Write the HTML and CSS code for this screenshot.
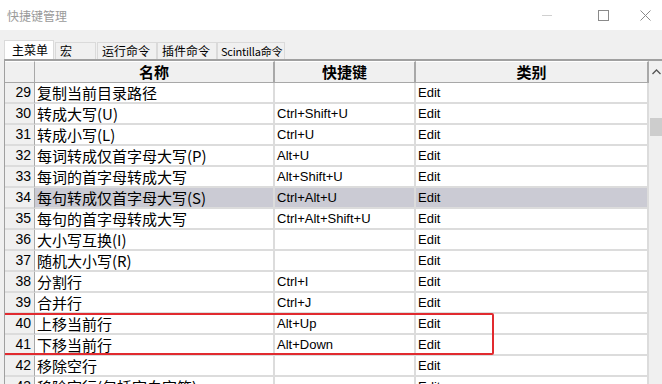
FILE: index.html
```html
<!DOCTYPE html>
<html lang="zh-CN">
<head>
  <meta charset="UTF-8" />
  <title>快捷键管理</title>
  <link rel="stylesheet" href="styles.css">
</head>
<body>
  <div class="window">
    <div class="titlebar">
      <span class="title">快捷键管理</span>
      <div class="controls">
        <span class="ctl min"></span>
        <span class="ctl max"></span>
        <svg class="ctl close" width="11" height="11" viewBox="0 0 11 11"><path d="M0.5 0.5 L10.5 10.5 M10.5 0.5 L0.5 10.5" stroke="#8a8a8a" stroke-width="1" fill="none"/></svg>
      </div>
    </div>

    <div class="tabs">
      <div class="tab active">主菜单</div>
      <div class="tab w40">宏</div>
      <div class="tab">运行命令</div>
      <div class="tab">插件命令</div>
      <div class="tab sci">Scintilla命令</div>
    </div>

    <div class="grid">
      <div class="table">
        <div class="row head">
          <div class="num"></div>
          <div class="cell">名称</div>
          <div class="cell">快捷键</div>
          <div class="cell">类别</div>
        </div>
        <div class="row"><div class="num">29</div><div class="cell name">复制当前目录路径</div><div class="cell"></div><div class="cell">Edit</div></div>
        <div class="row"><div class="num">30</div><div class="cell name">转成大写(U)</div><div class="cell">Ctrl+Shift+U</div><div class="cell">Edit</div></div>
        <div class="row"><div class="num">31</div><div class="cell name">转成小写(L)</div><div class="cell">Ctrl+U</div><div class="cell">Edit</div></div>
        <div class="row"><div class="num">32</div><div class="cell name">每词转成仅首字母大写(P)</div><div class="cell">Alt+U</div><div class="cell">Edit</div></div>
        <div class="row"><div class="num">33</div><div class="cell name">每词的首字母转成大写</div><div class="cell">Alt+Shift+U</div><div class="cell">Edit</div></div>
        <div class="row selected"><div class="num">34</div><div class="cell name">每句转成仅首字母大写(S)</div><div class="cell">Ctrl+Alt+U</div><div class="cell">Edit</div></div>
        <div class="row"><div class="num">35</div><div class="cell name">每句的首字母转成大写</div><div class="cell">Ctrl+Alt+Shift+U</div><div class="cell">Edit</div></div>
        <div class="row"><div class="num">36</div><div class="cell name">大小写互换(I)</div><div class="cell"></div><div class="cell">Edit</div></div>
        <div class="row"><div class="num">37</div><div class="cell name">随机大小写(R)</div><div class="cell"></div><div class="cell">Edit</div></div>
        <div class="row"><div class="num">38</div><div class="cell name">分割行</div><div class="cell">Ctrl+I</div><div class="cell">Edit</div></div>
        <div class="row"><div class="num">39</div><div class="cell name">合并行</div><div class="cell">Ctrl+J</div><div class="cell">Edit</div></div>
        <div class="row"><div class="num">40</div><div class="cell name">上移当前行</div><div class="cell">Alt+Up</div><div class="cell">Edit</div></div>
        <div class="row"><div class="num">41</div><div class="cell name">下移当前行</div><div class="cell">Alt+Down</div><div class="cell">Edit</div></div>
        <div class="row"><div class="num">42</div><div class="cell name">移除空行</div><div class="cell"></div><div class="cell">Edit</div></div>
        <div class="row"><div class="num">43</div><div class="cell name">移除空行(包括空白字符)</div><div class="cell"></div><div class="cell">Edit</div></div>

        <div class="mark"></div>
      </div>
      <div class="scrollbar">
        <svg class="arrow" width="9" height="6" viewBox="0 0 9 6"><path d="M0.5 5 L4.5 1 L8.5 5" stroke="#555" stroke-width="1.3" fill="none"/></svg>
        <div class="thumb"></div>
      </div>
    </div>
  </div>
</body>
</html>
```

FILE: styles.css
```css
body { margin: 0; background: #f0f0f0; font-family: "Liberation Sans", "Noto Sans CJK SC", sans-serif; overflow: hidden; }
.window { width: 662px; height: 384px; overflow: hidden; }

.titlebar { height: 30px; background: #fff; display: flex; align-items: center; justify-content: space-between; padding-left: 7px; }
.title { font-size: 12px; color: #9a9a9a; font-family: "Noto Sans CJK SC", sans-serif; }
.controls { display: flex; align-items: center; height: 30px; }
.ctl { display: block; }
.min { width: 10px; height: 1px; background: #d0d0d0; margin-right: 46px; }
.max { width: 9px; height: 9px; border: 1px solid #8a8a8a; margin-right: 31px; }
.close { margin-right: 11px; }

.tabs { display: flex; align-items: flex-end; height: 19px; margin-top: 10px; padding-left: 4px; }
.tab { height: 17px; line-height: 16px; font-size: 12px; padding: 0 0 0 4px; background: #f0f0f0; border: 1px solid #dadada; border-bottom: none; color: #000; font-family: "Noto Sans CJK SC", sans-serif; box-sizing: border-box; width: 60px; white-space: nowrap; overflow: hidden; }
.tab.active { height: 19px; line-height: 18px; background: #fff; width: 50px; padding-left: 7px; margin-right: 1px; }
.tab.w40 { width: 41px; margin-right: 1px; }
.tab.sci { width: 68px; padding-left: 3px; font-size: 11px; letter-spacing: -0.2px; }

.grid { display: flex; margin-left: 4px; border-top: 2px solid #a0a0a0; border-left: 1px solid #a0a0a0; height: 330px; }
.table { position: relative; width: 644px; overflow: hidden; }

.row { display: grid; grid-template-columns: 30px 240px 141px 233px; height: 21px; }
.row > div { box-sizing: border-box; height: 21px; border-bottom: 2px solid #dcdcdc; border-right: 2px solid #dcdcdc; white-space: nowrap; overflow: hidden; }
.num { background: #f0f0f0; font-size: 14px; text-align: right; padding-right: 3px; line-height: 19px; border-right: 1px solid #a8a8a8 !important; }
.cell { background: #fff; font-size: 13px; line-height: 19px; padding-left: 2px; }
.cell.name { font-size: 15px; font-family: "Noto Sans CJK SC", sans-serif; padding-left: 2px; line-height: 19px; }

.head > div { background: #f0f0f0; border-bottom: 1px solid #a8a8a8; border-right: 2px solid #a8a8a8; }
.head .cell { text-align: center; font-weight: bold; font-size: 15px; font-family: "Noto Sans CJK SC", sans-serif; line-height: 20px; padding: 0; }
.head { height: 22px; }
.head > div { height: 22px; border-top: 1px solid #fff; }

.selected .cell { background: #cbcbd4; }

.mark { position: absolute; left: -2px; top: 252px; width: 491px; height: 42px; border: 2px solid #e12a2f; border-radius: 2px; box-sizing: border-box; }

.scrollbar { width: 13px; background: #f0f0f0; position: relative; }
.arrow { position: absolute; left: 3px; top: 8px; }
.thumb { position: absolute; left: 1px; right: 0; top: 57px; height: 18px; background: #cdcdcd; }
```
